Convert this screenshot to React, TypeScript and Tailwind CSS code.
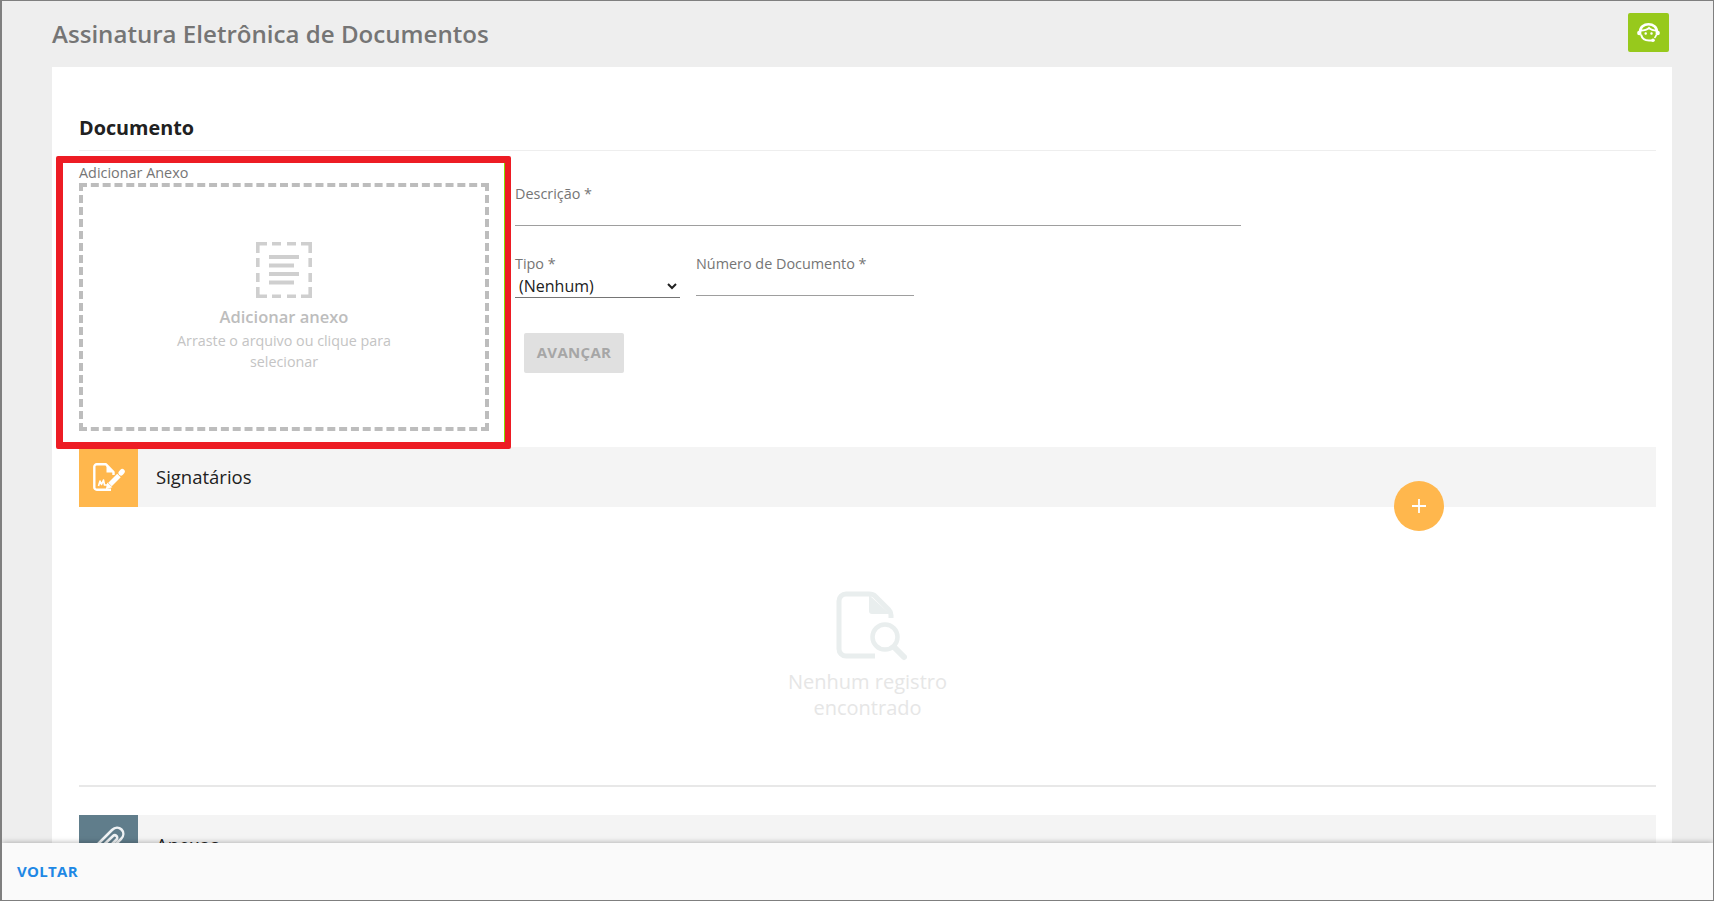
import React from "react";

function DashedDocIcon() {
  return (
    <svg width="56" height="56" viewBox="0 0 56 56" fill="none" className="block">
      <g stroke="#cfcfcf" strokeWidth="3.6" fill="none">
        <path d="M1.8 11V1.8H11" />
        <path d="M45 1.8H54.2V11" />
        <path d="M1.8 45V54.2H11" />
        <path d="M45 54.2H54.2V45" />
        <path d="M16 1.8h9M31 1.8h9M16 54.2h9M31 54.2h9M1.8 16v9M1.8 31v9M54.2 16v9M54.2 31v9" />
      </g>
      <g fill="#cfcfcf">
        <rect x="13" y="13" width="30" height="4" />
        <rect x="13" y="21.5" width="25" height="4" />
        <rect x="13" y="30" width="30" height="4" />
        <rect x="13" y="38.5" width="25" height="4" />
      </g>
    </svg>
  );
}

function FaceIcon() {
  return (
    <svg width="23" height="19" viewBox="0 0 23 19" fill="none">
      <path d="M3 9C3 4 7 1.300 11.500 1.300S20 4 20 9" stroke="#fff" strokeWidth="2.600" />
      <path d="M3.500 7.500C7 7.500 10 7 12 4.800C14 7 17 7.500 20 7.500" stroke="#fff" strokeWidth="1.800" />
      <circle cx="2.300" cy="10" r="2.200" fill="#fff" />
      <circle cx="20.700" cy="10" r="2.200" fill="#fff" />
      <path d="M4 11.500C5 15.500 8 17.500 12 17.500H16" stroke="#fff" strokeWidth="2" />
      <path d="M19.500 11.500C19 13 18.400 14 17.500 15" stroke="#fff" strokeWidth="1.600" />
      <rect x="7.500" y="9.300" width="2.400" height="2.400" rx="1" fill="#fff" />
      <rect x="13.300" y="9.300" width="2.400" height="2.400" rx="1" fill="#fff" />
      <circle cx="16" cy="17.200" r="1.800" fill="#fff" />
    </svg>
  );
}

function SignIcon() {
  return (
    <svg width="32" height="28" viewBox="0 0 32 28" fill="none">
      <path
        d="M18 26.700H4A2.500 2.500 0 0 1 1.300 24V4A2.500 2.500 0 0 1 4 1.300H13L20.500 9V12"
        stroke="#fff"
        strokeWidth="2.400"
        strokeLinejoin="round"
      />
      <path d="M13.500 1.500V9.500H21z" fill="#fff" />
      <path d="M5.500 23l1.500-5 1.500 3.500 2-4.500 1 5h3" stroke="#fff" strokeWidth="1.600" strokeLinejoin="round" />
      <path d="M17 21.500L26 12.500" stroke="#fff" strokeWidth="5" />
      <path d="M12.800 26.300L14.300 19.500L19.300 24.300z" fill="#fff" />
      <path d="M28 10L29.300 8.500" stroke="#fff" strokeWidth="5" strokeLinecap="round" />
    </svg>
  );
}

function ClipIcon() {
  return (
    <svg width="36" height="36" viewBox="0 0 36 36" fill="none" className="-mt-[10px]">
      <path
        d="M4 25L21 8c3-3 7-3 9.500-.5s2.500 6.500-.5 9.500L15 32c-2 2-5 2-6.500.500S7 28.500 9 26.500L22 14c1-1 2.500-1 3.500 0s1 2.500 0 3.500L13 30"
        stroke="#fff"
        strokeWidth="2.500"
        strokeLinecap="round"
        opacity="0.9"
      />
    </svg>
  );
}

function EmptyIcon() {
  return (
    <svg width="72" height="72" viewBox="0 0 72 72" fill="none">
      <path
        d="M40 65H11a7 7 0 0 1-7-7V10a7 7 0 0 1 7-7h23c3 0 4 0 6 2l14 14c1 1 2 3 2 5v3"
        stroke="#e9eeee"
        strokeWidth="5"
        strokeLinejoin="round"
      />
      <path d="M34 4v16a3 3 0 0 0 3 3h18z" fill="#e9eeee" />
      <circle cx="50" cy="46" r="12.500" stroke="#e9eeee" strokeWidth="4.500" fill="#fff" />
      <path d="M60 57l9 9" stroke="#e9eeee" strokeWidth="6" strokeLinecap="round" />
    </svg>
  );
}

function SectionBand({ color, label, icon }: { color: string; label: string; icon: React.ReactNode }) {
  return (
    <div className="flex h-[60px] items-center bg-[#f4f4f4]">
      <div className={`flex h-full w-[59px] items-center justify-center ${color}`}>{icon}</div>
      <span className="ml-[18px] text-[18.5px] font-medium text-[#212121]">{label}</span>
    </div>
  );
}

export default function App() {
  return (
    <div
      className="relative h-[901px] w-full overflow-hidden border border-l-2 border-[#7f7f7f] bg-[#eeeeee] text-[14.4px] text-[#757575]"
      style={{ fontFamily: '"Open Sans", sans-serif' }}
    >
      <header className="flex h-[66px] items-center justify-between pl-[50px] pr-[44px]">
        <h1 className="text-[24.1px] font-semibold text-[#757575]">Assinatura Eletrônica de Documentos</h1>
        <button className="mb-[4px] flex h-[39px] w-[41px] items-center justify-center rounded-[2px] bg-[#97c91c]">
          <FaceIcon />
        </button>
      </header>

      <main className="relative ml-[50px] mr-[41px] h-[900px] bg-white pl-[27px] pr-[16px] pt-[40px]">
        <h2 className="flex h-[44px] items-center border-b border-[#eeeeee] pb-[2px] pt-[1px] text-[19.8px] font-bold text-[#212121]">
          Documento
        </h2>

        <div className="flex h-[296px] items-start">
          <div className="w-[410px] shrink-0 pt-[12px]">
            <div className="h-[20px] leading-[20px]">Adicionar Anexo</div>
            <div className="flex h-[248px] flex-col items-center border-4 border-dashed border-[#bdbdbd] pt-[55px] text-center">
              <DashedDocIcon />
              <div className="mt-[7px] text-[16.5px] font-semibold leading-[24px] text-[#bdbdbd]">Adicionar anexo</div>
              <div className="mt-[1px] w-[260px] text-[14.3px] leading-[21px] text-[#c4c4c4]">
                Arraste o arquivo ou clique para selecionar
              </div>
            </div>
          </div>

          <div className="ml-[26px] flex flex-col">
            <label className="mt-[33px] flex w-[726px] flex-col">
              <span className="h-[20px] leading-[20px]">Descrição *</span>
              <input className="h-[22px] border-b border-[#9e9e9e] outline-none" />
            </label>
            <div className="mt-[28px] flex items-start gap-[16px]">
              <label className="flex w-[165px] flex-col">
                <span className="h-[20px] leading-[20px]">Tipo *</span>
                <select className="h-[24px] border-b border-[#757575] bg-white pb-[2px] pr-[2px] text-[16px] font-medium text-[#212121] outline-none">
                  <option>(Nenhum)</option>
                </select>
              </label>
              <label className="flex w-[218px] flex-col">
                <span className="h-[20px] leading-[20px]">Número de Documento *</span>
                <input className="h-[22px] border-b border-[#9e9e9e] outline-none" />
              </label>
            </div>
            <button className="ml-[9px] mt-[35px] h-[40px] w-[100px] rounded-[2px] bg-[#e0e0e0] pb-[2px] text-[15px] font-bold tracking-[0.3px] text-[#a6a6a6]">
              AVANÇAR
            </button>
          </div>
        </div>

        <div className="relative">
          <SectionBand color="bg-[#ffb74d]" label="Signatários" icon={<SignIcon />} />
          <button className="absolute left-[1315px] top-[34px] flex h-[50px] w-[50px] items-center justify-center rounded-full bg-[#ffb74d]">
            <svg width="16" height="16" viewBox="0 0 16 16">
              <path d="M8 1v14M1 8h14" stroke="#fff" strokeWidth="1.800" />
            </svg>
          </button>
        </div>

        <section className="flex h-[280px] flex-col items-center border-b-2 border-[#e8e8e8] pt-[84px]">
          <div className="ml-[6px] flex w-[72px] justify-center">
            <EmptyIcon />
          </div>
          <div className="mt-[6px] w-[220px] text-center text-[20px] leading-[26px] text-[#e6e6e6]">
            Nenhum registro encontrado
          </div>
        </section>

        <div className="mt-[28px]">
          <SectionBand color="bg-[#607d8b]" label="Anexos" icon={<ClipIcon />} />
        </div>
      </main>

      <div className="pointer-events-none absolute left-[54px] top-[155px] h-[293px] w-[455px] rounded-[2px] border-[7px] border-r-[6px] border-[#ed1c24] shadow-[inset_-1px_0_0_#80e000]" />

      <footer className="absolute inset-x-0 bottom-0 flex h-[57px] items-center bg-[#fafafa] pl-[15px] shadow-[0_-1px_5px_rgba(0,0,0,0.25)]">
        <button className="text-[15px] font-bold tracking-[0.3px] text-[#1e88e5]">VOLTAR</button>
      </footer>
    </div>
  );
}
